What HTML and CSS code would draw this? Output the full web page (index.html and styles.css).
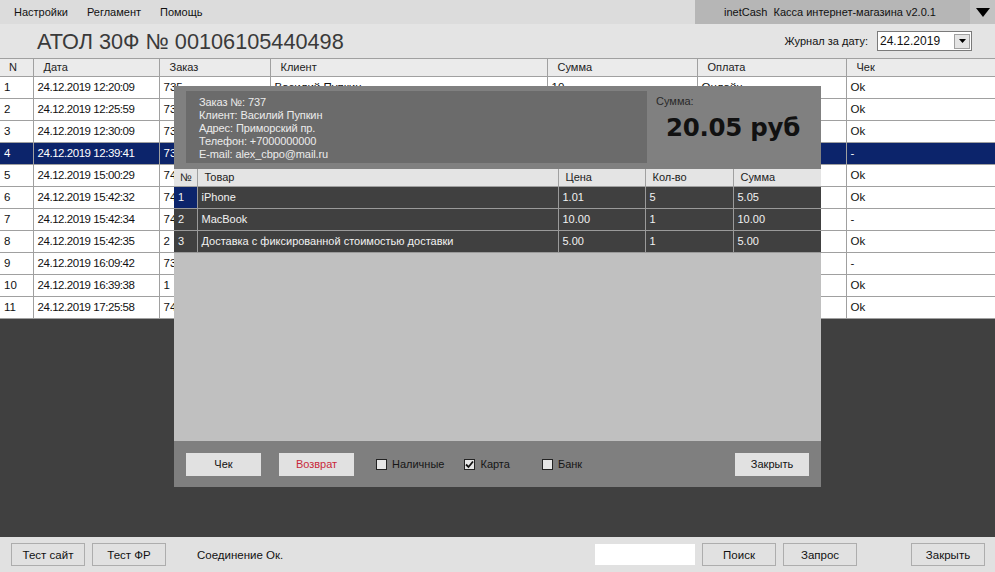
FILE: index.html
```html
<!DOCTYPE html>
<html lang="ru">
<head>
<meta charset="utf-8">
<title>inetCash</title>
<link rel="stylesheet" href="styles.css">
</head>
<body>
<div class="app">
  <div class="menubar">
    <nav class="menu">
      <span class="menu-item">Настройки</span>
      <span class="menu-item">Регламент</span>
      <span class="menu-item">Помощь</span>
    </nav>
    <div class="app-title">inetCash&nbsp; Касса интернет-магазина v2.0.1</div>
    <div class="app-arrow"><svg width="14" height="9" viewBox="0 0 14 9"><path d="M0 0H14L7 9Z" fill="#000"/></svg></div>
  </div>

  <div class="header">
    <h1 class="title">АТОЛ 30Ф № 00106105440498</h1>
    <div class="journal">
      <span class="journal-label">Журнал за дату:</span>
      <div class="datebox">
        <span class="date-text">24.12.2019</span>
        <span class="date-btn"><svg width="7" height="4" viewBox="0 0 7 4"><path d="M0 0H7L3.5 4Z" fill="#000"/></svg></span>
      </div>
    </div>
  </div>

  <div class="gridarea">
    <table class="grid">
      <colgroup>
        <col class="c-n"><col class="c-date"><col class="c-order"><col class="c-client"><col class="c-sum"><col class="c-pay"><col class="c-check">
      </colgroup>
      <thead>
        <tr><th class="th-n">N</th><th>Дата</th><th>Заказ</th><th>Клиент</th><th>Сумма</th><th>Оплата</th><th>Чек</th></tr>
      </thead>
      <tbody>
        <tr><td>1</td><td class="dt">24.12.2019 12:20:09</td><td>735</td><td>Василий Пупкин</td><td>10</td><td>Онлайн</td><td>Ok</td></tr>
        <tr><td>2</td><td class="dt">24.12.2019 12:25:59</td><td>736</td><td></td><td></td><td></td><td>Ok</td></tr>
        <tr><td>3</td><td class="dt">24.12.2019 12:30:09</td><td>736</td><td></td><td></td><td></td><td>Ok</td></tr>
        <tr class="sel"><td>4</td><td class="dt">24.12.2019 12:39:41</td><td>737</td><td></td><td></td><td></td><td>-</td></tr>
        <tr><td>5</td><td class="dt">24.12.2019 15:00:29</td><td>740</td><td></td><td></td><td></td><td>Ok</td></tr>
        <tr><td>6</td><td class="dt">24.12.2019 15:42:32</td><td>741</td><td></td><td></td><td></td><td>Ok</td></tr>
        <tr><td>7</td><td class="dt">24.12.2019 15:42:34</td><td>742</td><td></td><td></td><td></td><td>-</td></tr>
        <tr><td>8</td><td class="dt">24.12.2019 15:42:35</td><td>2</td><td></td><td></td><td></td><td>Ok</td></tr>
        <tr><td>9</td><td class="dt">24.12.2019 16:09:42</td><td>738</td><td></td><td></td><td></td><td>-</td></tr>
        <tr><td>10</td><td class="dt">24.12.2019 16:39:38</td><td>1</td><td></td><td></td><td></td><td>Ok</td></tr>
        <tr><td>11</td><td class="dt">24.12.2019 17:25:58</td><td>743</td><td></td><td></td><td></td><td>Ok</td></tr>
      </tbody>
    </table>

    <div class="modal">
      <div class="modal-top">
        <div class="info">
          <div>Заказ №: 737</div>
          <div>Клиент: Василий Пупкин</div>
          <div>Адрес: Приморский пр.</div>
          <div>Телефон: +7000000000</div>
          <div>E-mail: alex_cbpo@mail.ru</div>
        </div>
        <div class="total">
          <div class="total-label">Сумма:</div>
          <div class="total-value">20.05 руб</div>
        </div>
      </div>
      <div class="items">
        <table class="igrid">
          <colgroup><col class="i-n"><col class="i-name"><col class="i-price"><col class="i-qty"><col class="i-sum"></colgroup>
          <thead><tr><th>№</th><th>Товар</th><th>Цена</th><th>Кол-во</th><th>Сумма</th></tr></thead>
          <tbody>
            <tr><td class="cur">1</td><td>iPhone</td><td>1.01</td><td>5</td><td>5.05</td></tr>
            <tr><td>2</td><td>MacBook</td><td>10.00</td><td>1</td><td>10.00</td></tr>
            <tr><td>3</td><td>Доставка с фиксированной стоимостью доставки</td><td>5.00</td><td>1</td><td>5.00</td></tr>
          </tbody>
        </table>
      </div>
      <div class="modal-bottom">
        <button class="mbtn">Чек</button>
        <button class="mbtn mbtn-red">Возврат</button>
        <label class="chk chk-cash"><span class="box"></span>Наличные</label>
        <label class="chk chk-card"><span class="box"><svg width="9" height="9" viewBox="0 0 9 9"><path d="M1 4.5L3.5 7L8 1.5" fill="none" stroke="#111" stroke-width="1.8"/></svg></span>Карта</label>
        <label class="chk chk-bank"><span class="box"></span>Банк</label>
        <button class="mbtn mbtn-close">Закрыть</button>
      </div>
    </div>
  </div>

  <div class="footer">
    <button class="btn">Тест сайт</button>
    <button class="btn">Тест ФР</button>
    <span class="status">Соединение Ок.</span>
    <span class="search"></span>
    <button class="btn">Поиск</button>
    <button class="btn">Запрос</button>
    <button class="btn btn-close">Закрыть</button>
  </div>
</div>
</body>
</html>
```

FILE: styles.css
```css
* { box-sizing: border-box; }
html, body { margin: 0; padding: 0; }
body {
  width: 995px;
  height: 572px;
  overflow: hidden;
  font-family: "Liberation Sans", Arial, sans-serif;
  font-size: 11px;
  color: #1a1a1a;
  background: #e3e3e3;
}
.app { display: flex; flex-direction: column; height: 572px; }

/* menu bar */
.menubar { display: flex; height: 24px; background: #dcdcdc; }
.menu { flex: 1; display: flex; align-items: center; padding-left: 14px; gap: 19px; }
.menu-item { color: #111; }
.app-title { width: 275px; background: #b6b6b6; display: flex; align-items: center; padding-left: 29px; color: #111; }
.app-arrow { width: 25px; background: #c3c3c3; display: flex; align-items: center; justify-content: center; }

/* header */
.header { height: 34px; display: flex; align-items: center; justify-content: space-between; background: #e4e4e4; }
.title { margin: 2px 0 0 37px; font-weight: normal; font-size: 21.7px; color: #3a3a3a; }
.journal { display: flex; align-items: center; padding-right: 23px; gap: 9px; }
.journal-label { font-size: 11px; color: #111; }
.datebox { width: 95px; height: 20px; background: #fff; border: 1px solid #7a7a7a; display: flex; align-items: center; justify-content: space-between; padding: 0 1px 0 2px; }
.date-text { font-size: 12px; color: #111; }
.date-btn { width: 16px; height: 15px; background: #e4e4e4; border: 1px solid #a0a0a0; display: flex; align-items: center; justify-content: center; }

/* main grid */
.gridarea { position: relative; flex: 1; background: #404040; border-top: 1px solid #a0a0a0; }
.grid { border-collapse: collapse; table-layout: fixed; width: 995px; background: #fff; }
.c-n { width: 33px; } .c-date { width: 126px; } .c-order { width: 111px; } .c-client { width: 277px; }
.c-sum { width: 150px; } .c-pay { width: 149px; } .c-check { width: 149px; }
.grid th { height: 17px; background: #ebebeb; font-weight: normal; text-align: left; padding: 0 0 0 10px; border-right: 1px solid #a0a0a0; border-bottom: 1px solid #a0a0a0; color: #222; white-space: nowrap; }
.grid th.th-n { padding-left: 9px; }
.grid th:last-child { border-right: none; }
.grid td { height: 22px; padding: 0 0 0 4px; border-right: 1px solid #a0a0a0; border-bottom: 1px solid #a0a0a0; white-space: nowrap; overflow: hidden; color: #111; font-size: 11.5px; }
.grid td:last-child { border-right: none; }
.grid td.dt { letter-spacing: -0.45px; }
.grid tr.sel td { background: #0c246b; color: #fff; }

/* modal */
.modal { position: absolute; left: 174px; top: 27px; width: 647px; height: 401px; background: #808080; display: flex; flex-direction: column; }
.modal-top { height: 83px; display: flex; padding: 5px 0 0 12px; }
.info { width: 461px; height: 72px; background: #6b6b6b; color: #ececec; padding: 5px 0 0 13px; line-height: 13px; font-size: 11px; letter-spacing: -0.1px; }
.total { padding: 4px 0 0 9px; }
.total-label { color: #2a2a2a; font-size: 11px; }
.total-value { margin: 6px 0 0 10px; font-family: "DejaVu Sans", Verdana, sans-serif; font-weight: bold; font-size: 24.5px; color: #111; letter-spacing: -0.3px; }
.items { flex: 1; background: #c0c0c0; }
.igrid { border-collapse: collapse; table-layout: fixed; width: 647px; }
.i-n { width: 23px; } .i-name { width: 361px; } .i-price { width: 87px; } .i-qty { width: 88px; } .i-sum { width: 88px; }
.igrid th { height: 17px; background: #e4e4e4; font-weight: normal; text-align: left; padding: 0 0 0 7px; border-right: 1px solid #a0a0a0; border-bottom: 1px solid #a0a0a0; color: #222; }
.igrid th:first-child { padding-left: 6px; }
.igrid th:last-child { border-right: none; }
.igrid td { height: 22px; background: #404040; color: #f2f2f2; padding: 0 0 0 4px; border-right: 1px solid #9a9a9a; border-bottom: 1px solid #9a9a9a; white-space: nowrap; overflow: hidden; }
.igrid td:last-child { border-right: none; }
.igrid td.cur { background: #0c246b; }
.modal-bottom { height: 46px; background: #7f7f7f; display: flex; align-items: center; padding: 0 12px; }
.mbtn { height: 23px; width: 75px; border: none; background: #e1e1e1; font-family: inherit; font-size: 11px; color: #111; padding: 0; margin-right: 18px; }
.mbtn-red { color: #c8283a; margin-right: 22px; }
.mbtn-close { margin: 0 0 0 auto; width: 74px; }
.chk { display: flex; align-items: center; color: #161616; font-size: 11px; }
.box { width: 11px; height: 11px; border: 1px solid #222; background: #e6e6e6; margin-right: 5px; display: flex; align-items: center; justify-content: center; }
.chk-cash { margin-right: 20px; }
.chk-card { margin-right: 32px; }

/* footer */
.footer { height: 35px; background: #e1e1e1; display: flex; align-items: center; padding: 0 10px 0 11px; }
.btn { height: 23px; width: 74px; border: 1px solid #adadad; background: #e1e1e1; font-family: inherit; font-size: 11.5px; color: #111; padding: 0; margin-right: 7px; }
.status { margin-left: 24px; font-size: 11.5px; color: #111; }
.search { width: 100px; height: 21px; background: #fff; margin-left: auto; margin-right: 7px; }
.btn-close { margin: 0 0 0 47px; }
```
